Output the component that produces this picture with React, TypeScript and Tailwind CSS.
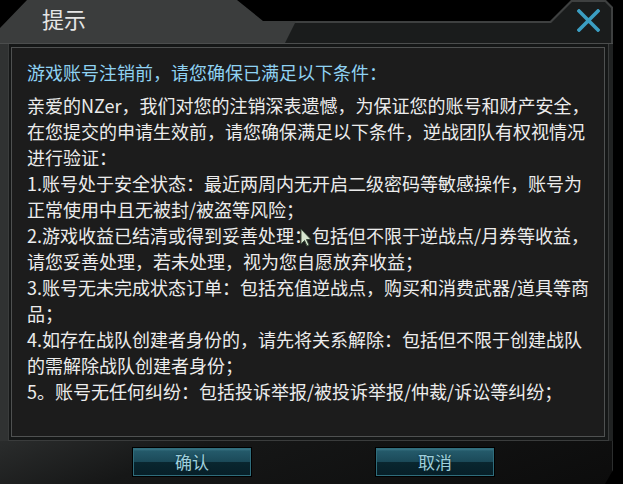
import React from "react";

const lines = [
  "亲爱的NZer，我们对您的注销深表遗憾，为保证您的账号和财产安全，",
  "在您提交的申请生效前，请您确保满足以下条件，逆战团队有权视情况",
  "进行验证：",
  "1.账号处于安全状态：最近两周内无开启二级密码等敏感操作，账号为",
  "正常使用中且无被封/被盗等风险；",
  "2.游戏收益已结清或得到妥善处理：包括但不限于逆战点/月券等收益，",
  "请您妥善处理，若未处理，视为您自愿放弃收益；",
  "3.账号无未完成状态订单：包括充值逆战点，购买和消费武器/道具等商",
  "品；",
  "4.如存在战队创建者身份的，请先将关系解除：包括但不限于创建战队",
  "的需解除战队创建者身份；",
  "5。账号无任何纠纷：包括投诉举报/被投诉举报/仲裁/诉讼等纠纷；",
];

function GameButton({ label }: { label: string }) {
  return (
    <button
      className="w-[118px] h-[28px] border border-[#2f6d7c] ring-1 ring-black
                 bg-[linear-gradient(to_bottom,#3b7686_0%,#245a6a_8%,#1b4a59_48%,#09262f_52%,#071f28_100%)]
                 text-[17px] leading-[26px] text-[#9fcfdc] [text-shadow:0_0_2px_#0a2a34]"
    >
      {label}
    </button>
  );
}

export default function App() {
  return (
    <div className="relative w-[623px] h-[484px] bg-black overflow-hidden font-['Noto_Sans_CJK_SC','Noto_Sans',sans-serif]">
      <div className="w-[613px] h-full flex flex-col">
        {/* 标题栏 */}
        <div className="flex h-[43px] shrink-0">
          <div className="relative z-10 w-[296px] shrink-0 bg-[#3b3d3d] [clip-path:polygon(0_28px,27px_0,237px_0,263px_21px,296px_21px,285px_43px,0_43px)]">
            <div className="pl-[42px] pt-[3px] text-[22px] leading-[30px] text-[#e6e6e6]">
              提示
            </div>
          </div>
          <div className="-ml-[16px] flex-1 bg-[#3e4040] [clip-path:polygon(0_21px,270px_21px,291px_0,326px_0,333px_7px,333px_43px,0_43px)]">
            <div className="w-full h-full flex justify-end items-start pr-[13px] pt-[9px] bg-[#1a1c1c] [clip-path:polygon(0_23px,271px_23px,292px_2px,325px_2px,331px_8px,331px_43px,0_43px)]">
              <svg width="23" height="23" viewBox="0 0 23 23">
                <path
                  d="M2 2 L21 21 M21 2 L2 21"
                  stroke="#3b9ec2"
                  strokeWidth="3.6"
                  strokeLinecap="square"
                />
              </svg>
            </div>
          </div>
        </div>
        <div className="h-px shrink-0 bg-[#4b4d4d]" />

        {/* 内容 */}
        <div className="flex h-[397px] shrink-0">
          <div className="w-[8px] bg-[#303232]" />
          <div className="w-[601px] flex bg-[#151717] pt-[3px] pl-[2px] pr-[3px] pb-[3px] border-l border-r border-b border-[#3a3c3c]">
            <div className="flex-1 border border-[#4f5151] bg-[#1c1c1c] pt-[11px] pl-[15px]">
              <div className="text-[18px] leading-[26px] text-[#8fd2f2] whitespace-nowrap">
                游戏账号注销前，请您确保已满足以下条件：
              </div>
              <div className="mt-[7px] text-[18px] leading-[26px] text-[#ececec]">
                {lines.map((l, i) => (
                  <div key={i} className="whitespace-nowrap">
                    {l}
                  </div>
                ))}
              </div>
            </div>
          </div>
          <div className="w-[4px] bg-[#202222]" />
        </div>

        {/* 按钮 */}
        <div className="flex-1 flex pt-[7px] pl-[133px] gap-[125px] border-r border-[#2c2e2e] bg-[linear-gradient(160deg,#2a2c2c_0%,#161717_30%,#0c0c0c_100%)] [clip-path:polygon(0_0,100%_0,100%_calc(100%-14px),calc(100%-8px)_100%,0_100%)]">
          <GameButton label="确认" />
          <GameButton label="取消" />
        </div>
      </div>

      {/* 鼠标指针 */}
      <svg className="absolute left-[300px] top-[228px]" width="13" height="19" viewBox="0 0 13 19">
        <path
          d="M1 1 L1 16 L4.5 12.5 L7 18 L9 17 L6.5 11.5 L11 11.5 Z"
          fill="#d8e6d0"
          stroke="#3a4a3a"
          strokeWidth="1"
        />
      </svg>
    </div>
  );
}
